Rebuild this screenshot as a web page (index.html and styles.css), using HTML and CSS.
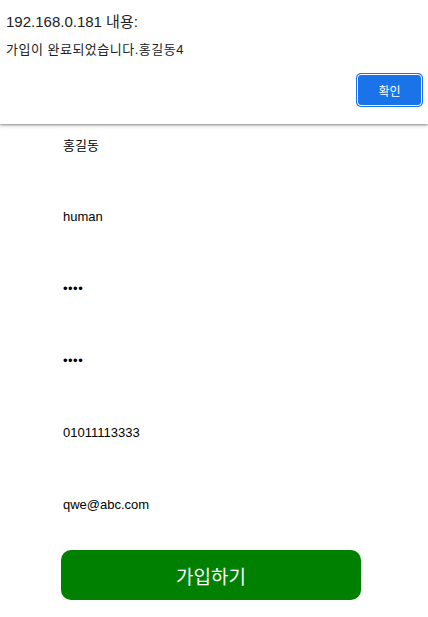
FILE: index.html
```html
<!DOCTYPE html>
<html lang="ko">
<head>
<meta charset="utf-8">
<link rel="stylesheet" href="styles.css">
</head>
<body>
<main class="page">
  <div class="form">
    <div class="row">홍길동</div>
    <div class="row">human</div>
    <div class="row dots">••••</div>
    <div class="row dots">••••</div>
    <div class="row">01011113333</div>
    <div class="row">qwe@abc.com</div>
    <button class="join">가입하기</button>
  </div>
</main>
<div class="dialog">
  <div class="d-title">192.168.0.181 내용:</div>
  <div class="d-msg">가입이 완료되었습니다.홍길동4</div>
  <div class="d-actions"><button class="ok">확인</button></div>
</div>
</body>
</html>
```
FILE: styles.css
```css
html, body {
  margin: 0;
  padding: 0;
  background: #fff;
  font-family: "Liberation Sans", "Noto Sans CJK KR", sans-serif;
}
.page {
  padding-top: 108px;
}
.form {
  display: flex;
  flex-direction: column;
  padding-left: 61px;
}
.row {
  height: 72px;
  display: flex;
  align-items: center;
  padding-left: 2px;
  font-size: 13px;
  color: #000;
}
.dots {
  font-size: 13px;
  letter-spacing: 0.5px;
}
.join {
  margin-top: 10px;
  width: 300px;
  height: 50px;
  border: none;
  border-radius: 10px;
  background: #008000;
  color: #fff;
  font-family: "Noto Sans CJK KR", sans-serif;
  font-size: 19px;
  padding: 0;
}
.dialog {
  position: absolute;
  top: 0;
  left: 0;
  right: 0;
  height: 124px;
  background: #fff;
  box-shadow: 0 1px 2px rgba(0,0,0,0.35), 0 2px 4px rgba(0,0,0,0.15);
  box-sizing: border-box;
  padding: 13px 6px 0 6px;
}
.d-title {
  font-size: 15px;
  color: #202124;
  line-height: 18px;
}
.d-msg {
  margin-top: 11px;
  font-size: 13px;
  letter-spacing: 0.5px;
  color: #202124;
  line-height: 15px;
}
.d-actions {
  display: flex;
  justify-content: flex-end;
  margin-top: 17px;
}
.ok {
  width: 65px;
  height: 32px;
  background: #1a73e8;
  color: #fff;
  border: 1px solid #fff;
  box-shadow: 0 0 0 1px #1a73e8;
  border-radius: 4px;
  font-family: "Noto Sans CJK KR", sans-serif;
  font-size: 12px;
  padding: 0;
}
```
